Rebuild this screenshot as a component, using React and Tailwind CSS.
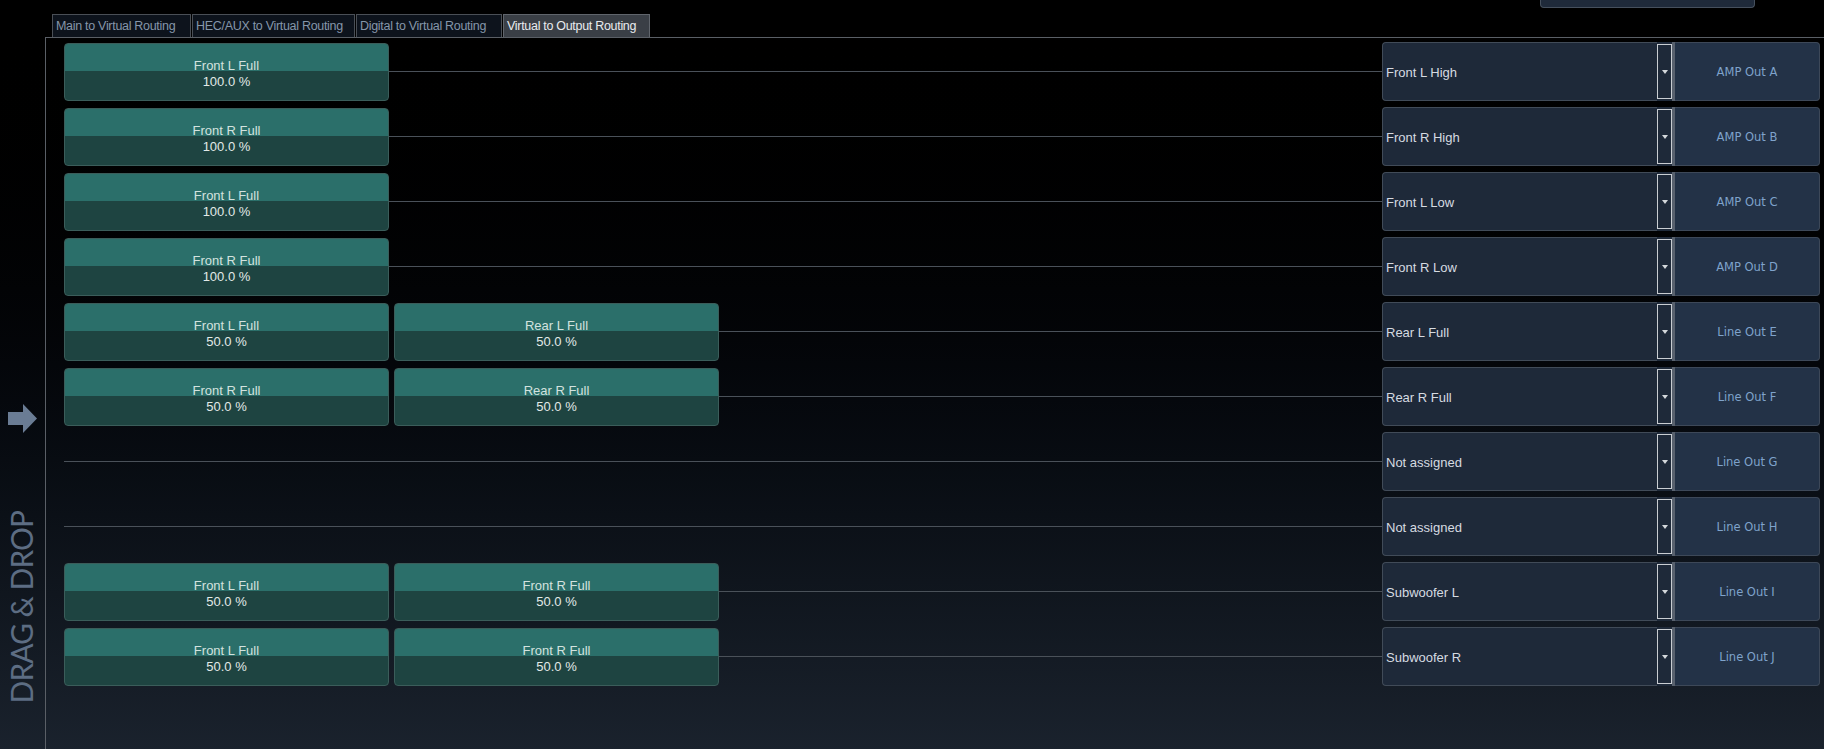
import React from 'react';

// Tabs across the top of the routing panel
const tabs = [
  { name: 'Main to Virtual Routing', w: 'w-[139px]' },
  { name: 'HEC/AUX to Virtual Routing', w: 'w-[163px]' },
  { name: 'Digital to Virtual Routing', w: 'w-[146px]' },
  { name: 'Virtual to Output Routing', w: 'w-[147px]', active: true },
];

// One row per physical output
const rows = [
  { sources: [['Front L Full', '100.0 %']], channel: 'Front L High', output: 'AMP Out A' },
  { sources: [['Front R Full', '100.0 %']], channel: 'Front R High', output: 'AMP Out B' },
  { sources: [['Front L Full', '100.0 %']], channel: 'Front L Low', output: 'AMP Out C' },
  { sources: [['Front R Full', '100.0 %']], channel: 'Front R Low', output: 'AMP Out D' },
  { sources: [['Front L Full', '50.0 %'], ['Rear L Full', '50.0 %']], channel: 'Rear L Full', output: 'Line Out E' },
  { sources: [['Front R Full', '50.0 %'], ['Rear R Full', '50.0 %']], channel: 'Rear R Full', output: 'Line Out F' },
  { sources: [], channel: 'Not assigned', output: 'Line Out G' },
  { sources: [], channel: 'Not assigned', output: 'Line Out H' },
  { sources: [['Front L Full', '50.0 %'], ['Front R Full', '50.0 %']], channel: 'Subwoofer L', output: 'Line Out I' },
  { sources: [['Front L Full', '50.0 %'], ['Front R Full', '50.0 %']], channel: 'Subwoofer R', output: 'Line Out J' },
];

const SourceCard = ({ name, value }) => (
  <div className="flex h-[58px] w-[325px] flex-col items-center justify-center rounded-[4px] border border-[#3b5d5a] bg-[linear-gradient(to_bottom,#2b6f6a_27px,#1e4441_27px)] pt-[3px] text-[13px] leading-[16px] text-[#d3e2df]">
    <span>{name}</span>
    <span className="text-[#e2eae8]">{value}</span>
  </div>
);

const OutputSelect = ({ channel, output }) => (
  <div className="flex h-[59px] w-[438px] -mt-px">
    <div className="flex flex-1 items-center rounded-l-[4px] border border-r-0 border-[#414b58] bg-[#1e2939] pt-[2px] pl-[3px] text-[13px] text-[#d6dbe1]">
      {channel}
    </div>
    <div className="flex w-[15px] items-center justify-center bg-[#1e2939] py-[2px]">
      <div className="flex h-full w-full items-center justify-center border border-[#c9cdd2]">
        <span className="h-0 w-0 border-x-[3px] border-t-[4px] border-x-transparent border-t-[#d4d8dc]" />
      </div>
    </div>
    <div className="w-[3px] bg-[#58616e]" />
    <div className="flex w-[145px] items-center justify-center rounded-r-[4px] border border-l-0 border-[#3d4858] bg-[#233247] pt-[2px] font-['DejaVu_Sans',sans-serif] text-[11.5px] text-[#7fa3cb]">
      {output}
    </div>
  </div>
);

export default function App() {
  return (
    <div className="flex h-[749px] w-full flex-col overflow-hidden bg-gradient-to-b from-[#000000] to-[#1a222d] font-['Liberation_Sans',Arial,sans-serif]">
      {/* HEADER: tabs + cut-off box at right */}
      <div className="flex h-[37px] items-end">
        <div className="ml-[52px] flex gap-px">
          {tabs.map((t) => (
            <div
              key={t.name}
              className={`flex h-[23px] items-center border border-b-0 px-[3px] pt-px text-[12.5px] tracking-[-0.3px] ${t.w} ${
                t.active
                  ? 'border-[#60656c] bg-[#3a3f46] text-[#e9ebee]'
                  : 'border-[#4a4f56] bg-[#0d131c] text-[#8596aa]'
              }`}
            >
              {t.name}
            </div>
          ))}
        </div>
        <div className="mr-[69px] ml-auto h-[8px] w-[215px] self-start rounded-b-[4px] border border-t-0 border-[#46505d] bg-[#1f2a3a]" />
      </div>

      {/* BODY */}
      <div className="flex flex-1">
        {/* drag & drop strip */}
        <div className="flex w-[45px] flex-col items-center">
          <svg className="mt-[367px]" width="29" height="29" viewBox="0 0 29 29">
            <polygon points="0,8 15,8 15,0 29,14.5 15,29 15,21 0,21" fill="#6a7c94" />
          </svg>
          <div className="mt-auto mb-[46px] -ml-[4px] rotate-180 font-['Lato',sans-serif] text-[30px] font-normal leading-none tracking-[-1px] text-[#5d6d83] [writing-mode:vertical-rl]">
            DRAG &amp; DROP
          </div>
        </div>

        {/* routing panel */}
        <div className="flex flex-1 flex-col gap-[7px] border-t border-l border-[#5a5f66] pt-[5px] pr-[4px] pl-[18px]">
          {rows.map((r, i) => (
            <div key={i} className="flex h-[58px] items-start">
              <div className="flex gap-[5px]">
                {r.sources.map(([name, value], j) => (
                  <SourceCard key={j} name={name} value={value} />
                ))}
              </div>
              <div className="mt-[28px] h-px flex-1 bg-[#4a5159]" />
              <OutputSelect channel={r.channel} output={r.output} />
            </div>
          ))}
        </div>
      </div>
    </div>
  );
}
